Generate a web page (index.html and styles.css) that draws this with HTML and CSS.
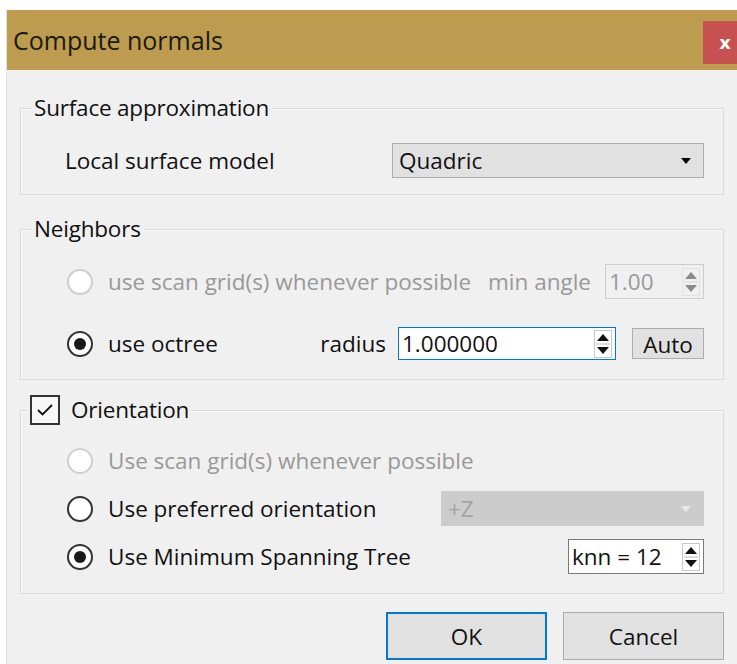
FILE: index.html
```html
<!DOCTYPE html>
<html lang="en">
<head>
<meta charset="utf-8">
<title>Compute normals</title>
<link rel="stylesheet" href="styles.css">
</head>
<body>
<div class="window">
  <div class="titlebar">
    <span class="title">Compute normals</span>
    <button class="close" type="button">x</button>
  </div>
  <div class="content">
    <section class="group">
      <div class="group-title">Surface approximation</div>
      <div class="row model-row">
        <span class="label grow">Local surface model</span>
        <div class="combo combo-model">
          <span>Quadric</span>
          <svg class="combo-arrow" width="10" height="6" viewBox="0 0 10 6"><path d="M0 0H10L5 6Z" fill="#000"/></svg>
        </div>
      </div>
    </section>

    <section class="group neighbors">
      <div class="group-title">Neighbors</div>
      <div class="row">
        <span class="radio disabled"></span>
        <span class="label disabled-text grow">use scan grid(s) whenever possible</span>
        <span class="label disabled-text angle-label">min angle</span>
        <div class="spin spin-angle disabled-box">
          <span>1.00</span>
          <svg class="spin-arrows" width="18" height="28" viewBox="0 0 18 28"><rect x="0.5" y="0.5" width="17" height="27" fill="none" stroke="#e2e2e2"/><path d="M3 11H15L9 4Z" fill="#8a8a8a"/><path d="M2 14H16" stroke="#d6d6d6"/><path d="M3 17H15L9 24Z" fill="#8a8a8a"/></svg>
        </div>
      </div>
      <div class="row octree-row">
        <span class="radio checked"></span>
        <span class="label grow">use octree</span>
        <span class="label radius-label">radius</span>
        <div class="spin spin-radius focused">
          <span>1.000000</span>
          <svg class="spin-arrows" width="18" height="28" viewBox="0 0 18 28"><rect x="0.5" y="0.5" width="17" height="27" fill="none" stroke="#c8c8c8"/><path d="M3 11H15L9 4Z" fill="#111"/><path d="M2 14H16" stroke="#bbb"/><path d="M3 17H15L9 24Z" fill="#111"/></svg>
        </div>
        <button class="btn auto" type="button">Auto</button>
      </div>
    </section>

    <section class="group orientation">
      <div class="group-title check-title">
        <span class="checkbox">
          <svg width="20" height="16" viewBox="0 0 20 16"><path d="M3 8L7.5 12.5L17 3" fill="none" stroke="#111" stroke-width="1.8"/></svg>
        </span>
        <span>Orientation</span>
      </div>
      <div class="row">
        <span class="radio disabled"></span>
        <span class="label disabled-text grow">Use scan grid(s) whenever possible</span>
      </div>
      <div class="row">
        <span class="radio"></span>
        <span class="label grow">Use preferred orientation</span>
        <div class="combo combo-axis disabled-combo">
          <span>+Z</span>
          <svg class="combo-arrow" width="10" height="6" viewBox="0 0 10 6"><path d="M0 0H10L5 6Z" fill="#e8e8e8"/></svg>
        </div>
      </div>
      <div class="row">
        <span class="radio checked"></span>
        <span class="label grow">Use Minimum Spanning Tree</span>
        <div class="spin spin-knn">
          <span>knn = 12</span>
          <svg class="spin-arrows" width="18" height="28" viewBox="0 0 18 28"><rect x="0.5" y="0.5" width="17" height="27" fill="none" stroke="#c8c8c8"/><path d="M3 11H15L9 4Z" fill="#111"/><path d="M2 14H16" stroke="#bbb"/><path d="M3 17H15L9 24Z" fill="#111"/></svg>
        </div>
      </div>
    </section>

    <div class="buttons">
      <button class="btn dialog-btn default" type="button">OK</button>
      <button class="btn dialog-btn" type="button">Cancel</button>
    </div>
  </div>
</div>
</body>
</html>
```
FILE: styles.css
```css
html, body {
  margin: 0;
  padding: 0;
  background: #ffffff;
  overflow: hidden;
}

body {
  font-family: "Open Sans", "Noto Sans", sans-serif;
  font-size: 22.5px;
  color: #111;
}

.window {
  margin: 10px 0 0 6px;
  width: 740px;
  height: 660px;
  background: #f0f0f0;
  border-left: 1px solid #e2e2e2;
}

.titlebar {
  height: 60px;
  background: #bd9c50;
  display: flex;
  align-items: center;
  justify-content: space-between;
}

.title {
  font-size: 25px;
  padding-left: 6px;
  color: #1a1a10;
}

.close {
  align-self: flex-start;
  margin-top: 11px;
  margin-right: -2px;
  width: 46px;
  height: 43px;
  border: none;
  background: #c65150;
  color: #fff;
  font: bold 18px "DejaVu Sans", sans-serif;
  padding: 0 2px 0 0;
}

.content {
  padding: 38px 14px 0 13px;
  width: 704px;
}

.group {
  position: relative;
  border: 1px solid #dadada;
  box-shadow: inset 1px 1px 0 #fafafa;
  padding: 34px 19px 16px 44px;
  margin-bottom: 34px;
}

.group-title {
  position: absolute;
  top: -16px;
  left: 10px;
  padding: 0 3px;
  background: #f0f0f0;
  line-height: 30px;
  letter-spacing: -0.2px;
}

.row {
  display: flex;
  align-items: center;
  height: 35px;
}

.label {
  white-space: nowrap;
}

.grow {
  flex: 1;
}

.disabled-text {
  color: #999999;
}

.combo {
  height: 35px;
  box-sizing: border-box;
  border: 1px solid #adadad;
  background: #e1e1e1;
  display: flex;
  align-items: center;
  justify-content: space-between;
  padding: 0 12px 0 6px;
  flex: none;
}

.combo-model {
  width: 312px;
}

.neighbors {
  padding-bottom: 18px;
  margin-bottom: 30px;
}

.neighbors .row + .row {
  margin-top: 27px;
}

.angle-label {
  margin-right: 14px;
}

.radius-label {
  margin-right: 12px;
}

.spin {
  height: 35px;
  box-sizing: border-box;
  border: 1px solid #7a7a7a;
  background: #fff;
  display: flex;
  align-items: center;
  justify-content: space-between;
  padding: 0 3px 0 3px;
  flex: none;
}

.spin-angle {
  width: 99px;
}

.disabled-box {
  border-color: #cccccc;
  background: #f0f0f0;
  color: #999999;
}

.spin-radius {
  width: 218px;
  height: 33px;
}

.focused {
  border-color: #0078d7;
}

.btn {
  font-family: inherit;
  font-size: 22.5px;
  color: #111;
  background: #e1e1e1;
  border: 1px solid #adadad;
  padding: 0;
}

.auto {
  width: 72px;
  height: 31px;
  margin-left: 16px;
  flex: none;
}

.radio {
  width: 26px;
  height: 26px;
  box-sizing: border-box;
  border-radius: 50%;
  border: 2px solid #333;
  background: #fff;
  margin: 0 15px 0 2px;
  position: relative;
  flex: none;
}

.radio.disabled {
  border-color: #cfcfcf;
}

.radio.checked::after {
  content: "";
  position: absolute;
  left: 5px;
  top: 5px;
  width: 12px;
  height: 12px;
  border-radius: 50%;
  background: #1a1a1a;
}

.orientation {
  padding-top: 32px;
  padding-bottom: 19px;
}

.orientation .row + .row {
  margin-top: 13px;
}

.check-title {
  display: flex;
  align-items: center;
  gap: 11px;
  left: 6px;
  top: -16px;
}

.checkbox {
  width: 30px;
  height: 30px;
  box-sizing: border-box;
  border: 2px solid #333;
  background: #f7f7f7;
  display: flex;
  align-items: center;
  justify-content: center;
}

.combo-axis {
  width: 263px;
}

.disabled-combo {
  background: #cccccc;
  border-color: #cccccc;
  color: #a3a3a3;
}

.spin-knn {
  width: 136px;
}

.buttons {
  display: flex;
  justify-content: flex-end;
  gap: 16px;
  margin-top: -16px;
}

.dialog-btn {
  width: 161px;
  height: 48px;
}

.default {
  border: 2px solid #0078d7;
}
```
